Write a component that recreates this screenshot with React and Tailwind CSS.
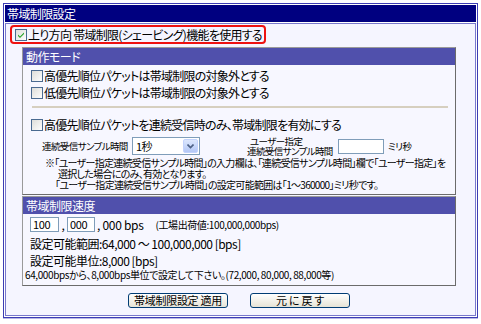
import React from 'react'

const jp = "font-['MS_UI_Gothic','Noto_Sans_CJK_JP',sans-serif] [font-feature-settings:'palt'] whitespace-nowrap"

function Check({ checked }) {
    return (
        <svg width="12" height="12" viewBox="0 0 12 12" className="shrink-0">
            <defs>
                <linearGradient id="cbg" x1="0" y1="0" x2="1" y2="1">
                    <stop offset="0" stopColor="#dcdcd7" />
                    <stop offset="1" stopColor="#ffffff" />
                </linearGradient>
            </defs>
            <rect x="0.5" y="0.5" width="11" height="11" fill="url(#cbg)" stroke="#4a6a90" />
            {checked && <path d="M3 5.5 L5 7.5 L9 3.5 L9 5 L5 9 L3 7 Z" fill="#21a121" />}
        </svg>
    )
}

function Section({ title, children, className = '' }) {
    return (
        <div className={`border border-[#6b6b6b] border-t-[#9a9a9a] border-l-[#9a9a9a] bg-[#f7f7ff] ${className}`}>
            <div className="h-[17px] bg-[#5050ac] text-white text-[12px] leading-[17px] pl-[3px] tracking-[-0.5px]">{title}</div>
            {children}
        </div>
    )
}

function Btn({ children }) {
    return (
        <button className="w-[100px] h-[15px] rounded-[3px] border border-[#003c74] bg-gradient-to-b from-white to-[#e6e3d6] text-[11px] leading-[13px] tracking-[-0.3px] text-black">
            {children}
        </button>
    )
}

export default function App() {
    return (
        <div className={`w-[481px] h-[324px] bg-white p-[3px] text-black ${jp}`}>
            <div className="w-[475px] h-[315px] border border-[#3c3cb4] p-px shadow-[0_1px_0_#b8b8e8]">
                <div className="h-full flex flex-col">
                    <div className="h-[17px] bg-[#000080] text-white text-[12px] leading-[17px] pl-[2px] tracking-[-0.6px]">帯域制限設定</div>
                    <div className="mt-px flex-1 border border-[#7878cc] bg-[#f5f5ff] flex flex-col">
                        <div className="ml-[4px] mt-px w-[256px] h-[19px] border-2 border-[#ee1111] rounded-[4px] flex items-center pl-[3px] gap-[1px] text-[12px] leading-[15px] tracking-[-0.7px]">
                            <Check checked />
                            <span>上り方向 帯域制限(シェービング)機能を使用する</span>
                        </div>

                        <Section title="動作モード" className="ml-[16px] mt-[3px] w-[434px]">
                            <div className="pt-[2px] pb-[4px]">
                                <div className="h-[17px] flex items-center pl-[8px] gap-[1px] text-[12px] leading-[17px] tracking-[-0.75px]">
                                    <Check />
                                    <span>高優先順位パケットは帯域制限の対象外とする</span>
                                </div>
                                <div className="h-[17px] flex items-center pl-[8px] gap-[1px] text-[12px] leading-[17px] tracking-[-0.75px]">
                                    <Check />
                                    <span>低優先順位パケットは帯域制限の対象外とする</span>
                                </div>
                                <div className="mt-[5px] ml-[9px] mr-[7px] h-[2px] bg-[#d6cfbf]" />
                                <div className="mt-[8px] h-[17px] flex items-center pl-[8px] gap-[1px] text-[12px] leading-[17px] tracking-[-0.75px]">
                                    <Check />
                                    <span>高優先順位パケットを連続受信時のみ、帯域制限を有効にする</span>
                                </div>
                                <div className="mt-[4px] h-[18px] flex items-center pl-[19px] text-[9.5px] leading-[11px] tracking-[-0.6px]">
                                    <span className="w-[90px]">連続受信サンプル時間</span>
                                    <div className="w-[68px] h-[18px] border border-[#7f9db9] bg-white flex items-center">
                                        <span className="flex-1 pl-[3px] text-[11px]">1秒</span>
                                        <div className="w-[15px] h-[14px] mr-px rounded-[2px] bg-gradient-to-b from-[#dce7fd] to-[#b4c8f6] border border-[#c3d3fd] flex items-center justify-center">
                                            <svg width="7" height="5" viewBox="0 0 7 5">
                                                <path d="M0.5 0.5 L3.5 3.5 L6.5 0.5" stroke="#4d6185" strokeWidth="1.6" fill="none" />
                                            </svg>
                                        </div>
                                    </div>
                                    <div className="ml-[47px] w-[91px] leading-[10px]">
                                        <div className="pl-[3px]">ユーザー指定</div>
                                        <div>連続受信サンプル時間</div>
                                    </div>
                                    <div className="w-[46px] h-[15px] border border-[#7f9db9] bg-white" />
                                    <span className="ml-[4px]">ミリ秒</span>
                                </div>
                                <div className="mt-[2px] text-[10px] leading-[11px] tracking-[-0.7px]">
                                    <div className="pl-[22px]">※「ユーザー指定連続受信サンプル時間」の入力欄は、「連続受信サンプル時間」欄で「ユーザー指定」を</div>
                                    <div className="pl-[35px]">選択した場合にのみ、有効となります。</div>
                                    <div className="pl-[32px]">「ユーザー指定連続受信サンプル時間」の設定可能範囲は「1～360000」ミリ秒です。</div>
                                </div>
                            </div>
                        </Section>

                        <Section title="帯域制限速度" className="ml-[16px] mt-px w-[434px]">
                            <div className="pt-[3px] pb-[5px]">
                                <div className="h-[15px] flex items-center pl-[7px] text-[12px] leading-[15px] tracking-[-0.3px]">
                                    <div className="w-[29px] h-[15px] border border-[#7f9db9] bg-white text-[11px] leading-[13px] pl-[2px]">100</div>
                                    <span className="w-[8px] text-center">,</span>
                                    <div className="w-[28px] h-[15px] border border-[#7f9db9] bg-white text-[11px] leading-[13px] pl-[2px]">000</div>
                                    <span className="ml-[2px]">, 000 bps</span>
                                    <span className="ml-[12px] text-[10px] tracking-[-0.4px]">(工場出荷値:100,000,000bps)</span>
                                </div>
                                <div className="mt-[4px] h-[16px] leading-[16px] pl-[7px] text-[12px] tracking-[-0.5px]">設定可能範囲:64,000 ～ 100,000,000 [bps]</div>
                                <div className="mt-px h-[16px] leading-[16px] pl-[7px] text-[12px] tracking-[-0.5px]">設定可能単位:8,000 [bps]</div>
                                <div className="h-[11px] leading-[11px] pl-[2px] text-[10px] tracking-[-0.4px]">64,000bpsから、8,000bps単位で設定して下さい。(72,000, 80,000, 88,000等)</div>
                            </div>
                        </Section>

                        <div className="mt-[7px] flex justify-center gap-[22px] pr-[3px]">
                            <Btn>帯域制限設定 適用</Btn>
                            <Btn>元 に 戻 す</Btn>
                        </div>
                    </div>
                </div>
            </div>
        </div>
    )
}
